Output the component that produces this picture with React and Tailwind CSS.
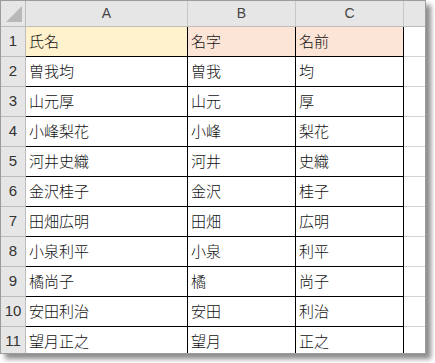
import React from 'react';

const rows = [
  ['氏名', '名字', '名前'],
  ['曽我均', '曽我', '均'],
  ['山元厚', '山元', '厚'],
  ['小峰梨花', '小峰', '梨花'],
  ['河井史織', '河井', '史織'],
  ['金沢桂子', '金沢', '桂子'],
  ['田畑広明', '田畑', '広明'],
  ['小泉利平', '小泉', '利平'],
  ['橘尚子', '橘', '尚子'],
  ['安田利治', '安田', '利治'],
  ['望月正之', '望月', '正之'],
];

const jp = { fontFamily: '"Noto Sans CJK JP", "Noto Sans", sans-serif' };
const latin = { fontFamily: '"Liberation Sans", Arial, sans-serif' };

export default function App() {
  return (
    <div className="w-[435px] h-[363px] bg-white">
      <div className="w-[426px] h-[354px] overflow-hidden bg-white border border-[#9c9c9c] shadow-[5px_5px_5px_rgba(0,0,0,0.45)]">
        {/* column header */}
        <div className="flex h-[26px] bg-[#e6e6e6] border-b border-[#bdbdbd] text-[14px] text-[#444]" style={latin}>
          <div className="w-[25px] shrink-0 border-r border-[#bdbdbd]">
            <svg width="24" height="25" viewBox="0 0 24 25">
              <polygon points="21,5 21,21 5,21" fill="#b8b8b8" />
            </svg>
          </div>
          <div className="w-[162px] shrink-0 border-r border-[#c8c8c8] flex items-center justify-center">A</div>
          <div className="w-[108px] shrink-0 border-r border-[#c8c8c8] flex items-center justify-center">B</div>
          <div className="w-[108px] shrink-0 border-r border-[#c8c8c8] flex items-center justify-center">C</div>
          <div className="w-[21px] shrink-0" />
        </div>

        {rows.map((r, i) => {
          const first = i === 0;
          return (
            <div key={i} className="flex h-[30px]">
              <div
                className="w-[25px] shrink-0 bg-[#e6e6e6] border-r border-b border-[#bdbdbd] flex items-center justify-center text-[15px] text-[#333]"
                style={latin}
              >
                {i + 1}
              </div>
              <div
                className={`w-[162px] shrink-0 border-r border-b border-black flex items-center pl-[3px] text-[15px] font-light text-[#111] ${first ? 'bg-[#fff2cc]' : ''}`}
                style={jp}
              >
                {r[0]}
              </div>
              <div
                className={`w-[108px] shrink-0 border-r border-b border-black flex items-center pl-[3px] text-[15px] font-light text-[#111] ${first ? 'bg-[#fce4d6]' : ''}`}
                style={jp}
              >
                {r[1]}
              </div>
              <div
                className={`w-[108px] shrink-0 border-r border-b border-black flex items-center pl-[3px] text-[15px] font-light text-[#111] ${first ? 'bg-[#fce4d6]' : ''}`}
                style={jp}
              >
                {r[2]}
              </div>
              <div className="w-[21px] shrink-0 border-b border-[#d4d4d4]" />
            </div>
          );
        })}
      </div>
    </div>
  );
}
